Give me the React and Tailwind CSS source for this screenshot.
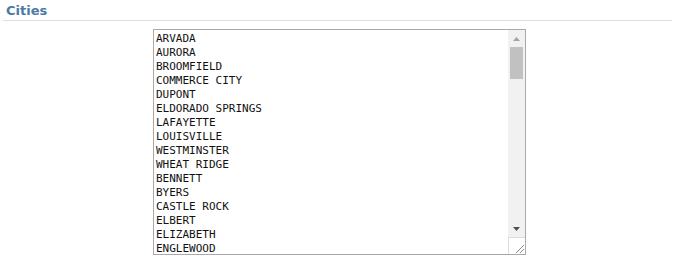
import React from 'react';

const cities = [
  'ARVADA', 'AURORA', 'BROOMFIELD', 'COMMERCE CITY', 'DUPONT', 'ELDORADO SPRINGS',
  'LAFAYETTE', 'LOUISVILLE', 'WESTMINSTER', 'WHEAT RIDGE', 'BENNETT', 'BYERS',
  'CASTLE ROCK', 'ELBERT', 'ELIZABETH', 'ENGLEWOOD',
];

const App = () => {
  return (
    <div className="w-[684px] h-[264px] bg-white">
      {/* Section header */}
      <div className="mx-[3px] pl-[3px] pt-[4px] pb-[2px] border-b border-[#dddddd] w-[669px]">
        <h2 className="text-[13px] leading-[14px] font-bold text-[#4a7aa5] [font-family:Verdana,'DejaVu_Sans',sans-serif]">
          Cities
        </h2>
      </div>

      {/* City list box */}
      <div className="pt-[8px] pl-[153px]">
        <div className="w-[373px] h-[226px] border border-[#a9a9a9] bg-white flex">
          <div className="flex-1 overflow-hidden px-[2px] pt-[2px] text-[11px] leading-[14px] text-[#111] [font-family:'DejaVu_Sans_Mono',monospace] whitespace-pre">
            {cities.map((c) => (
              <div key={c}>{c}</div>
            ))}
          </div>

          {/* Scrollbar */}
          <div className="w-[17px] flex flex-col bg-[#f1f1f1]">
            <div className="h-[17px] flex items-center justify-center">
              <svg width="7" height="4" viewBox="0 0 7 4">
                <polygon points="3.5,0 7,4 0,4" fill="#a3a3a3" />
              </svg>
            </div>
            <div className="flex-1">
              <div className="ml-[2px] w-[13px] h-[32px] bg-[#c1c1c1]" />
            </div>
            <div className="h-[17px] flex items-center justify-center">
              <svg width="7" height="4" viewBox="0 0 7 4">
                <polygon points="0,0 7,0 3.5,4" fill="#505050" />
              </svg>
            </div>
            <div className="h-[17px] bg-white border-t border-l border-[#dcdcdc] flex items-end justify-end">
              <svg width="12" height="12" viewBox="0 0 12 12">
                <line x1="3" y1="11" x2="11" y2="3" stroke="#8a8a8a" strokeWidth="1" />
                <line x1="7" y1="11" x2="11" y2="7" stroke="#8a8a8a" strokeWidth="1" />
              </svg>
            </div>
          </div>
        </div>
      </div>
    </div>
  );
};

export default App;
